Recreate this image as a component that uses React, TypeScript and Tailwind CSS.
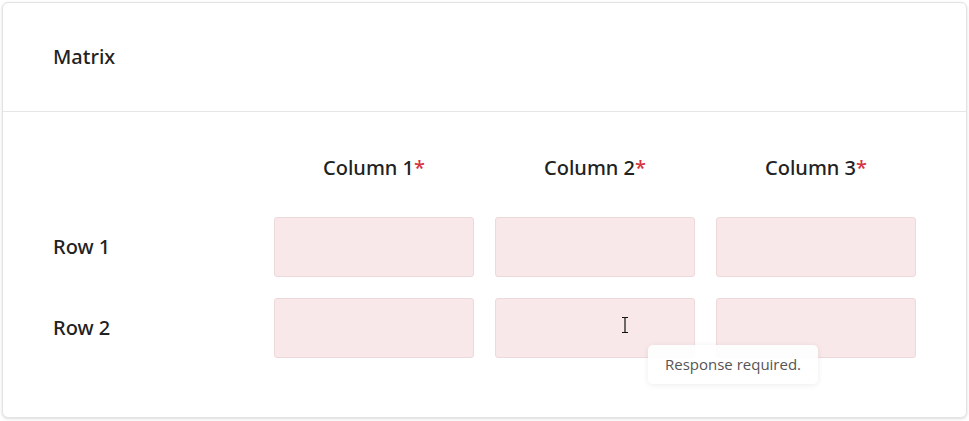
const columns = ["Column 1", "Column 2", "Column 3"];
const rows = ["Row 1", "Row 2"];

const CellInput = () => (
	<input
		type="text"
		aria-invalid="true"
		className="h-[60px] w-full rounded-[3px] border border-[#edd9da] bg-[#f9e8e9] outline-none"
	/>
);

export default function App() {
	return (
		<div className="min-h-screen bg-white p-[2px] font-['Noto_Sans',sans-serif] text-[#222]">
			<section className="relative h-[416px] rounded-[6px] border border-[#e3e3e3] bg-white shadow-[0_1px_3px_rgba(0,0,0,0.14)]">
				<header className="flex h-[109px] items-center border-b border-[#e6e6e6] px-[50px]">
					<h2 className="text-[20px] font-medium leading-[28px]">Matrix</h2>
				</header>
				<div className="grid grid-cols-4 gap-x-[21px] gap-y-[21px] px-[50px] pt-[42px]">
					<div className="mb-[14px]" />
					{columns.map((column) => (
						<div key={column} className="mb-[14px] text-center text-[20px] font-medium leading-[28px]">
							{column}
							<span className="text-[#d6343f]">*</span>
						</div>
					))}
					{rows.map((row) => (
						<div key={row} className="contents">
							<div className="flex items-center text-[20px] font-medium leading-[28px]">{row}</div>
							{columns.map((column) => (
								<CellInput key={column} />
							))}
						</div>
					))}
				</div>

				<svg
					className="absolute left-[617px] top-[313px]"
					width="10"
					height="18"
					viewBox="0 0 10 18"
					fill="none"
					stroke="#111"
					strokeWidth="1.2"
				>
					<path d="M2 1.5h2.2c0.4 0 0.8 0.4 0.8 0.8M8 1.5H5.8c-0.4 0-0.8 0.4-0.8 0.8M5 2.3v13.4M2 16.5h2.2c0.4 0 0.8-0.4 0.8-0.8M8 16.5H5.8c-0.4 0-0.8-0.4-0.8-0.8" />
				</svg>

				<div className="absolute left-[645px] top-[342px] flex h-[39px] w-[170px] items-center justify-center rounded-[5px] bg-white/90 font-['Open_Sans',sans-serif] text-[15px] text-[#555] shadow-[0_1px_6px_rgba(0,0,0,0.08)]">
					Response required.
				</div>
			</section>
		</div>
	);
}
